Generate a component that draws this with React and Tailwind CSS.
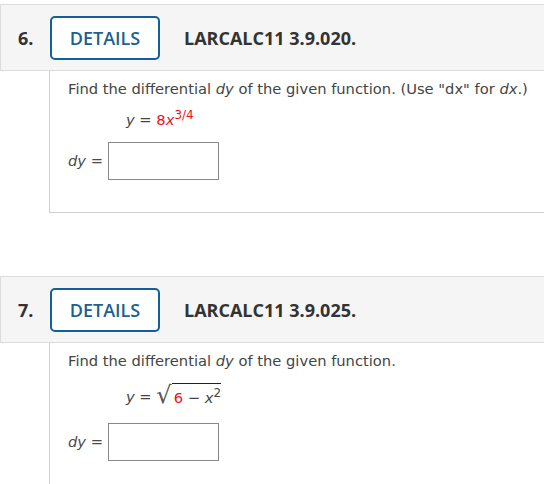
import React from 'react';

const HeaderBar = ({ num, code }) => (
  <div className="flex h-[67px] items-center border-y border-l border-[#dcdcdc] bg-[#f5f5f5] pl-[17px] font-['Open_Sans',sans-serif] text-[18px] font-bold text-[#333]">
    <span className="w-[32px]">{num}</span>
    <div className="flex h-[44px] w-[110px] items-center justify-center rounded-[5px] border-2 border-[#0f609b] bg-white font-semibold text-[#1d5f8f]">
      DETAILS
    </div>
    <span className="ml-[24px]">{code}</span>
  </div>
);

const DyRow = () => (
  <div className="flex items-center">
    <span className="w-[40px] text-[#4a4a4a]">
      <i>dy</i> =
    </span>
    <div className="h-[38px] w-[111px] border border-[#888] bg-white" />
  </div>
);

export default function App() {
  return (
    <div className="min-h-[484px] bg-white pt-1 font-['DejaVu_Sans',Verdana,sans-serif] text-[14.7px] leading-[20px] text-[#444]">
      {/* Question 6 */}
      <HeaderBar num="6." code="LARCALC11 3.9.020." />
      <div className="ml-[49px] h-[142px] border-b border-l border-[#cfcfcf] pl-[18px] pt-2">
        <p>
          Find the differential <i>dy</i> of the given function. (Use "dx" for <i>dx</i>.)
        </p>
        <div className="mt-[11px] pl-[58px]">
          <i>y</i> = <span className="text-[#e8131b]">8<i>x</i><sup className="text-[12px]">3/4</sup></span>
        </div>
        <div className="mt-[12px]">
          <DyRow />
        </div>
      </div>

      <div className="h-[63px]" />

      {/* Question 7 */}
      <HeaderBar num="7." code="LARCALC11 3.9.025." />
      <div className="ml-[49px] h-[141px] border-l border-[#cfcfcf] pl-[18px] pt-2">
        <p>Find the differential <i>dy</i> of the given function.</p>
        <div className="mt-[11px] flex items-end pl-[58px]">
          <span className="leading-[20px]">
            <i>y</i> =&nbsp;
          </span>
          <span className="text-[24px] leading-[24px] text-[#555]">√</span>
          <span className="mt-[1px] border-t border-[#222] pl-[2px] pt-[4px] leading-[19px]">
            <span className="text-[#e8131b]">6</span> − <i>x</i>
            <sup className="text-[12px]">2</sup>
          </span>
        </div>
        <div className="mt-[16px]">
          <DyRow />
        </div>
      </div>
    </div>
  );
}
